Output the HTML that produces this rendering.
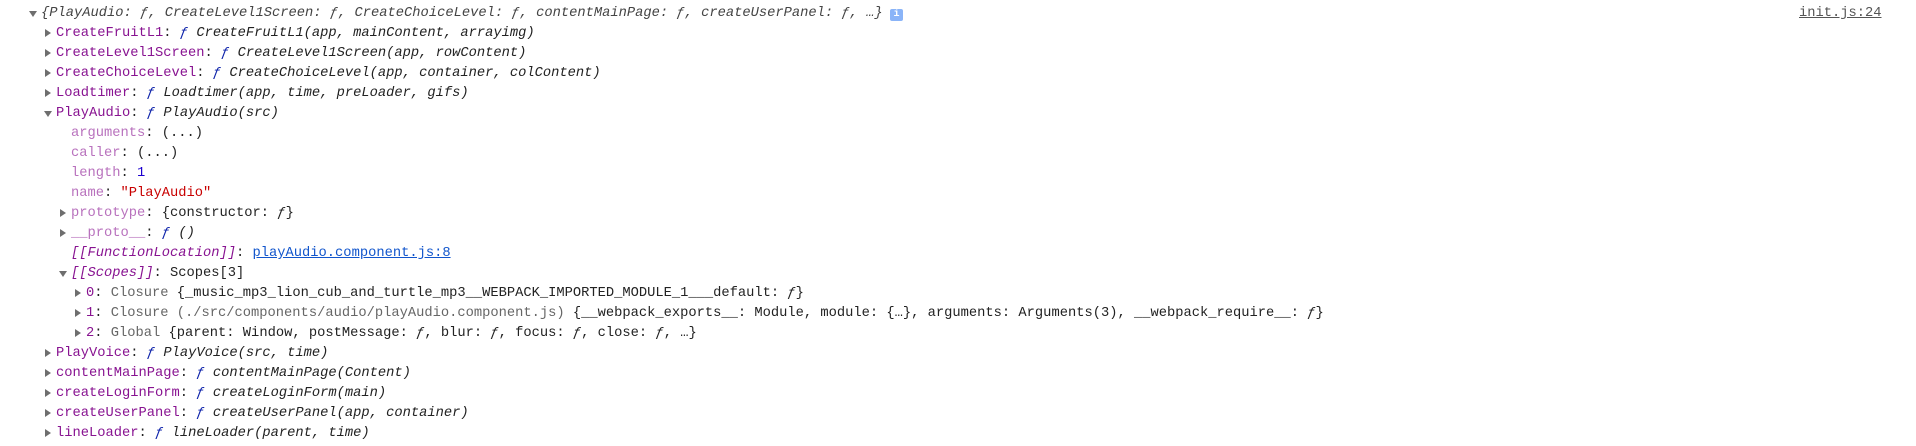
<!DOCTYPE html>
<html><head><meta charset="utf-8"><style>
html,body{margin:0;padding:0;background:#fff;width:1916px;height:446px;overflow:hidden}
body{font-family:"Liberation Mono",monospace;font-size:13.75px;color:#222;position:relative}
.r{position:absolute;height:20px;line-height:20px;white-space:pre}
.r.ar::before{content:"";position:absolute;left:-11px;top:5px;border-left:6px solid #6e6e6e;border-top:4px solid transparent;border-bottom:4px solid transparent}
.r.ad::before{content:"";position:absolute;left:-12px;top:7px;border-top:6px solid #6e6e6e;border-left:4px solid transparent;border-right:4px solid transparent}
.k{color:#881391}.d{color:#b871bd}.i{font-style:italic}.f{color:#0d22aa;font-style:italic}
.s{color:#c80000}.n{color:#1c00cf}.g{color:#666}.sm{color:#555}
.l{color:#1155cc;text-decoration:underline}
.top{color:#444;font-style:italic}
.info{position:absolute;left:890px;top:9px;width:13px;height:12px;background:#8ab4f8;border-radius:2px;color:#fff;font-size:10px;line-height:12px;text-align:center;font-style:normal;font-weight:bold}
.src{position:absolute;left:1799px;top:4px;line-height:20px;color:#555;text-decoration:underline}
</style></head><body>
<div class="r ad top" style="left:41px;top:4px">{PlayAudio: ƒ, CreateLevel1Screen: ƒ, CreateChoiceLevel: ƒ, contentMainPage: ƒ, createUserPanel: ƒ, …}</div>
<div class="info">i</div>
<div class="src">init.js:24</div>
<div class="r ar" style="left:56px;top:24px"><span class="k">CreateFruitL1</span>: <span class="f">ƒ</span> <span class="i">CreateFruitL1(app, mainContent, arrayimg)</span></div>
<div class="r ar" style="left:56px;top:44px"><span class="k">CreateLevel1Screen</span>: <span class="f">ƒ</span> <span class="i">CreateLevel1Screen(app, rowContent)</span></div>
<div class="r ar" style="left:56px;top:64px"><span class="k">CreateChoiceLevel</span>: <span class="f">ƒ</span> <span class="i">CreateChoiceLevel(app, container, colContent)</span></div>
<div class="r ar" style="left:56px;top:84px"><span class="k">Loadtimer</span>: <span class="f">ƒ</span> <span class="i">Loadtimer(app, time, preLoader, gifs)</span></div>
<div class="r ad" style="left:56px;top:104px"><span class="k">PlayAudio</span>: <span class="f">ƒ</span> <span class="i">PlayAudio(src)</span></div>
<div class="r" style="left:71px;top:124px"><span class="d">arguments</span>: (...)</div>
<div class="r" style="left:71px;top:144px"><span class="d">caller</span>: (...)</div>
<div class="r" style="left:71px;top:164px"><span class="d">length</span>: <span class="n">1</span></div>
<div class="r" style="left:71px;top:184px"><span class="d">name</span>: <span class="s">"PlayAudio"</span></div>
<div class="r ar" style="left:71px;top:204px"><span class="d">prototype</span>: {constructor: <span class="i">ƒ</span>}</div>
<div class="r ar" style="left:71px;top:224px"><span class="d">__proto__</span>: <span class="f">ƒ</span> <span class="i">()</span></div>
<div class="r" style="left:71px;top:244px"><span class="k i">[[FunctionLocation]]</span>: <span class="l">playAudio.component.js:8</span></div>
<div class="r ad" style="left:71px;top:264px"><span class="k i">[[Scopes]]</span>: Scopes[3]</div>
<div class="r ar" style="left:86px;top:284px"><span class="k">0</span>: <span class="g">Closure</span> {_music_mp3_lion_cub_and_turtle_mp3__WEBPACK_IMPORTED_MODULE_1___default: <span class="i">ƒ</span>}</div>
<div class="r ar" style="left:86px;top:304px"><span class="k">1</span>: <span class="g">Closure (./src/components/audio/playAudio.component.js)</span> {__webpack_exports__: Module, module: {…}, arguments: Arguments(3), __webpack_require__: <span class="i">ƒ</span>}</div>
<div class="r ar" style="left:86px;top:324px"><span class="k">2</span>: <span class="g">Global</span> {parent: Window, postMessage: <span class="i">ƒ</span>, blur: <span class="i">ƒ</span>, focus: <span class="i">ƒ</span>, close: <span class="i">ƒ</span>, …}</div>
<div class="r ar" style="left:56px;top:344px"><span class="k">PlayVoice</span>: <span class="f">ƒ</span> <span class="i">PlayVoice(src, time)</span></div>
<div class="r ar" style="left:56px;top:364px"><span class="k">contentMainPage</span>: <span class="f">ƒ</span> <span class="i">contentMainPage(Content)</span></div>
<div class="r ar" style="left:56px;top:384px"><span class="k">createLoginForm</span>: <span class="f">ƒ</span> <span class="i">createLoginForm(main)</span></div>
<div class="r ar" style="left:56px;top:404px"><span class="k">createUserPanel</span>: <span class="f">ƒ</span> <span class="i">createUserPanel(app, container)</span></div>
<div class="r ar" style="left:56px;top:424px"><span class="k">lineLoader</span>: <span class="f">ƒ</span> <span class="i">lineLoader(parent, time)</span></div>
</body></html>
